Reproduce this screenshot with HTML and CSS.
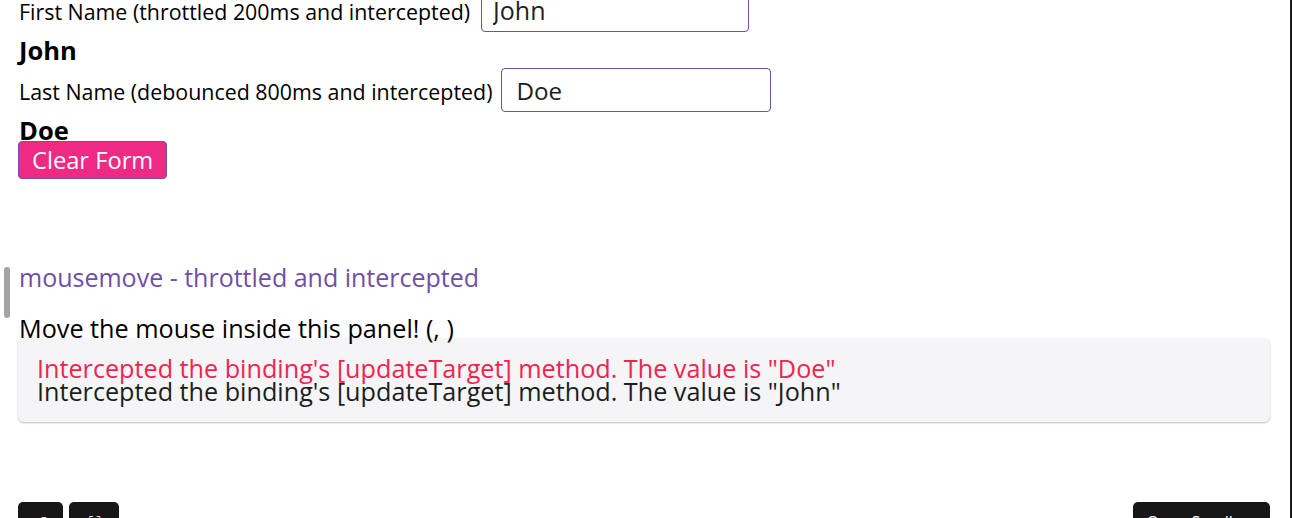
FILE: index.html
```html
<!DOCTYPE html>
<html>
<head>
<meta charset="utf-8">
<link rel="stylesheet" href="styles.css">
</head>
<body>
<div class="frame">
  <div class="page">
    <div class="form">
      <div class="field first">
        <label class="label">First Name (throttled 200ms and intercepted)</label>
        <input class="input" type="text" value="John">
      </div>
      <div class="value">John</div>
      <div class="field second">
        <label class="label">Last Name (debounced 800ms and intercepted)</label>
        <input class="input" type="text" value="Doe">
      </div>
      <div class="value">Doe</div>
      <button class="clear">Clear Form</button>
    </div>

    <div class="section">
      <span class="grip"></span>
      <h2 class="heading">mousemove - throttled and intercepted</h2>
      <p class="hint">Move the mouse inside this panel! (, )</p>
      <div class="log">
        <div class="log-line error">Intercepted the binding's [updateTarget] method. The value is "Doe"</div>
        <div class="log-line">Intercepted the binding's [updateTarget] method. The value is "John"</div>
      </div>
    </div>

    <div class="toolbar">
      <div class="tools-left">
        <button class="tool small">&#8634;</button>
        <button class="tool small wide">&#9974;</button>
      </div>
      <button class="tool big">Open Sandbox</button>
    </div>
  </div>
</div>
</body>
</html>
```

FILE: styles.css
```css
html, body {
  margin: 0;
  padding: 0;
  background: #fff;
  overflow: hidden;
}
body {
  font-family: "Open Sans", "Noto Sans", sans-serif;
  color: #000;
}
.frame {
  width: 1292px;
  height: 518px;
  box-sizing: border-box;
  border-right: 2px solid #1c1c1c;
  overflow: hidden;
}
.page {
  padding: 0 20px 0 18px;
}
.form {
  margin-top: -12px;
}
.field {
  display: flex;
  align-items: baseline;
  gap: 9px;
}
.first {
  gap: 11px;
}
.label {
  font-size: 21.4px;
  padding-left: 1px;
}
.input {
  width: 268px;
  height: 44px;
  box-sizing: border-box;
  border: 1px solid #6f4fa8;
  border-radius: 4px;
  padding: 0 11px;
  font-family: inherit;
  font-size: 25px;
  color: #1e1e1e;
  background: #fff;
  outline: none;
}
.second .input {
  width: 270px;
  padding: 0 14px;
  font-size: 24.2px;
}
.value {
  font-size: 25.5px;
  font-weight: 700;
  padding-left: 1px;
  line-height: 26px;
  margin: 5px 0;
}
.clear {
  display: block;
  margin-top: -7px;
  height: 38px;
  padding: 0 13px;
  background: #ee2a85;
  color: #fff;
  border: 1px solid #7a4ea6;
  border-radius: 4px;
  font-family: inherit;
  font-size: 23.7px;
  line-height: 34px;
}
.section {
  position: relative;
  margin-top: 83px;
}
.grip {
  position: absolute;
  left: -14px;
  top: 5px;
  width: 6px;
  height: 51px;
  border-radius: 3px;
  background: #a3a3a3;
}
.heading {
  margin: 0;
  font-size: 25px;
  font-weight: 400;
  color: #6f4fa8;
  padding-left: 1px;
  line-height: 30px;
}
.hint {
  margin: 21px 0 0;
  font-size: 25.2px;
  line-height: 30px;
  padding-left: 1px;
}
.log {
  margin-top: -5px;
  height: 84px;
  box-sizing: border-box;
  background: #f5f5f7;
  border-radius: 6px;
  box-shadow: 0 1px 2px rgba(0,0,0,0.25);
  padding: 19px 19px;
}
.log-line {
  font-size: 25.2px;
  line-height: 23px;
  color: #1b1f1b;
}
.log-line.error {
  color: #f0244f;
}
.toolbar {
  display: flex;
  justify-content: space-between;
  margin-top: 80px;
}
.tools-left {
  display: flex;
  gap: 6px;
}
.tool {
  height: 40px;
  background: #171717;
  color: #fff;
  border: none;
  border-radius: 5px;
  font-family: inherit;
  font-size: 16px;
  padding: 0;
}
.tool.small {
  width: 45px;
}
.tool.wide {
  width: 50px;
}
.tool.big {
  width: 137px;
}
```
